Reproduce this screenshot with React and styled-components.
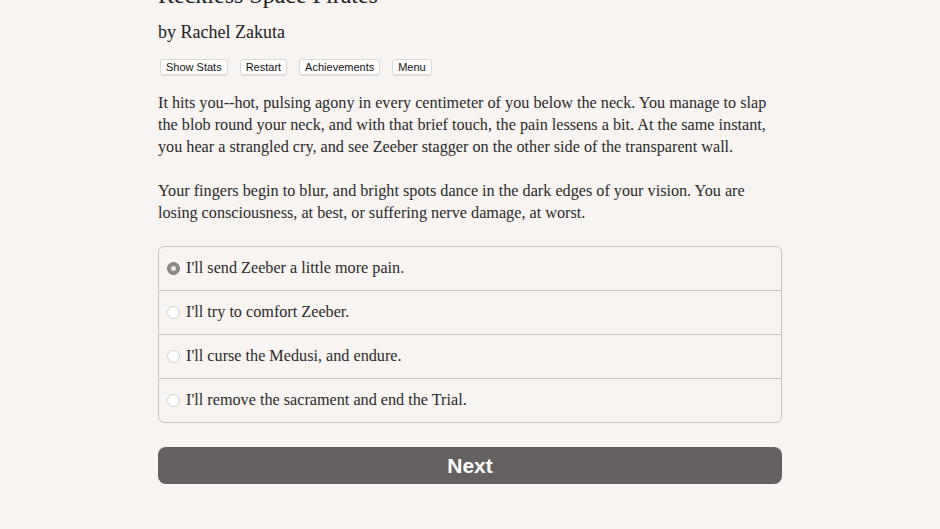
import styled, { createGlobalStyle } from 'styled-components'

const GlobalStyle = createGlobalStyle`
  html, body {
    margin: 0;
    padding: 0;
    background: #f7f4f1;
  }
  body {
    font-family: "Liberation Serif", "Times New Roman", serif;
    color: #2b2b2b;
  }
`

const Page = styled.div`
  width: 624px;
  margin: -21px auto 0;
`

const Title = styled.h1`
  margin: 0;
  font-size: 24px;
  font-weight: normal;
  line-height: 32px;
  color: #222;
`

const Author = styled.h2`
  margin: 9px 0 0;
  font-size: 18px;
  font-weight: normal;
  line-height: 24px;
  color: #222;
`

const Toolbar = styled.div`
  display: flex;
  gap: 12px;
  margin: 15px 0 0 2px;
`

const ToolButton = styled.button`
  font-family: "Liberation Sans", Arial, sans-serif;
  font-size: 11px;
  line-height: 14px;
  color: #111;
  background: #fff;
  border: 1px solid #dcd9d6;
  border-radius: 3px;
  padding: 0 5px;
  height: 16px;
  box-shadow: 0 1px 1px rgba(0, 0, 0, 0.08);
`

const Story = styled.div`
  margin-top: 17px;
  font-size: 16.2px;
  line-height: 22px;
  color: #2b2b2b;

  p {
    margin: 0 0 22px;
  }
`

const Choices = styled.div`
  margin-top: 14px;
  border: 1px solid #c9c5c1;
  border-radius: 6px;
  overflow: hidden;
`

const Choice = styled.label`
  display: flex;
  align-items: center;
  height: 43px;
  padding-left: 8px;
  font-size: 16.2px;
  color: #2b2b2b;
  border-top: ${(p) => (p.$first ? 'none' : '1px solid #c9c5c1')};
`

const Radio = styled.span`
  box-sizing: border-box;
  width: 13px;
  height: 13px;
  border-radius: 50%;
  margin-right: 6px;
  flex-shrink: 0;
  background: ${(p) => (p.$checked ? '#8e8b89' : '#fff')};
  border: 1px solid ${(p) => (p.$checked ? '#7d7a78' : '#d3d0cd')};
  display: flex;
  align-items: center;
  justify-content: center;

  &::after {
    content: '';
    display: ${(p) => (p.$checked ? 'block' : 'none')};
    width: 5px;
    height: 5px;
    border-radius: 50%;
    background: #e8e6e4;
  }
`

const NextButton = styled.button`
  display: block;
  width: 100%;
  height: 37px;
  margin-top: 24px;
  background: #646160;
  color: #fff;
  border: none;
  border-radius: 8px;
  font-family: "Liberation Sans", Arial, sans-serif;
  font-weight: bold;
  font-size: 21px;
`

const choices = [
  "I'll send Zeeber a little more pain.",
  "I'll try to comfort Zeeber.",
  "I'll curse the Medusi, and endure.",
  "I'll remove the sacrament and end the Trial.",
]

export default function App() {
  return (
    <>
      <GlobalStyle />
      <Page>
        <Title>Reckless Space Pirates</Title>
        <Author>by Rachel Zakuta</Author>
        <Toolbar>
          <ToolButton>Show Stats</ToolButton>
          <ToolButton>Restart</ToolButton>
          <ToolButton>Achievements</ToolButton>
          <ToolButton>Menu</ToolButton>
        </Toolbar>
        <Story>
          <p>
            It hits you--hot, pulsing agony in every centimeter of you below the neck. You manage to slap
            the blob round your neck, and with that brief touch, the pain lessens a bit. At the same instant,
            you hear a strangled cry, and see Zeeber stagger on the other side of the transparent wall.
          </p>
          <p>
            Your fingers begin to blur, and bright spots dance in the dark edges of your vision. You are
            losing consciousness, at best, or suffering nerve damage, at worst.
          </p>
        </Story>
        <Choices>
          {choices.map((c, i) => (
            <Choice key={i} $first={i === 0}>
              <Radio $checked={i === 0} />
              {c}
            </Choice>
          ))}
        </Choices>
        <NextButton>Next</NextButton>
      </Page>
    </>
  )
}
